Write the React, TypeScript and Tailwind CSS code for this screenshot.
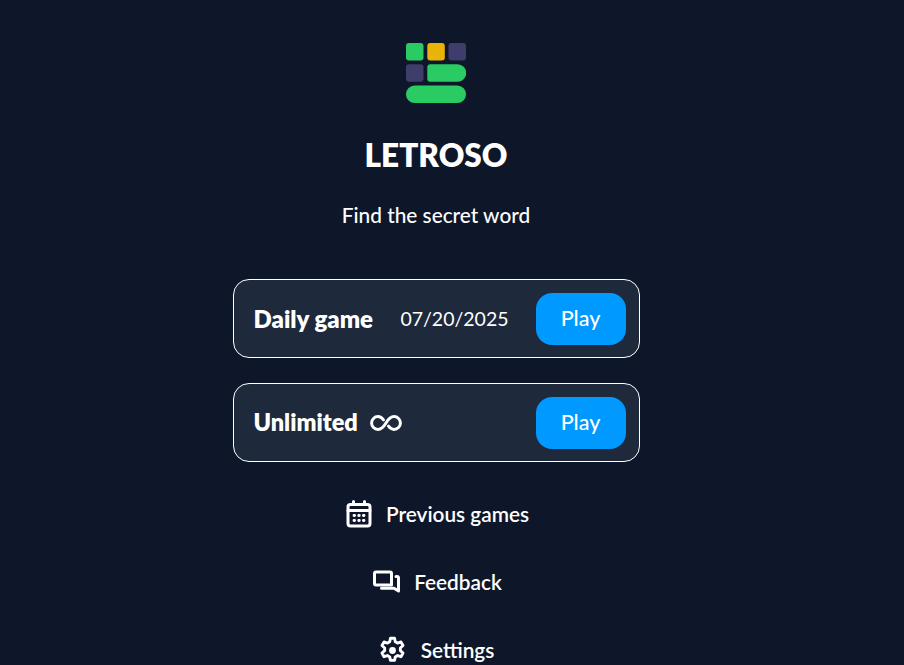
const Logo = () => (
  <svg width="60" height="60" viewBox="0 0 60 60" className="block">
    <rect x="0" y="0" width="17.5" height="17.5" rx="3" fill="#2acb62" />
    <rect x="21.3" y="0" width="17.5" height="17.5" rx="3" fill="#eab308" />
    <rect x="42.5" y="0" width="17.5" height="17.5" rx="3" fill="#3f3d6b" />
    <rect x="0" y="21.3" width="17.5" height="17.5" rx="3" fill="#3f3d6b" />
    <path d="M24.3 21.3H51.5a8.700 8.700 0 0 1 0 17.400H24.3a3 3 0 0 1-3-3V24.3a3 3 0 0 1 3-3z" fill="#2acb62" />
    <rect x="0" y="42.5" width="60" height="17.5" rx="8.750" fill="#2acb62" />
  </svg>
);

const LoopIcon = () => (
  <svg width="32" height="18" viewBox="0 0 32 18" fill="none" stroke="white" strokeWidth="3" strokeLinecap="round">
    <path d="M13.500 5.800C12 3.800 10.500 2.600 8 2.600a6.400 6.400 0 0 0 0 12.800c3.600 0 5.600-2.400 8-6.400s4.400-6.400 8-6.400a6.400 6.400 0 0 1 0 12.800c-2.500 0-4-1.200-5.500-3.200" />
  </svg>
);

const CalendarIcon = () => (
  <svg width="26" height="28" viewBox="0 0 26 28" fill="none" stroke="white" strokeWidth="3" strokeLinecap="round" strokeLinejoin="round">
    <rect x="2" y="4.500" width="22" height="21.500" rx="2.500" />
    <path d="M2 10.500h22M7.500 1.500V4M18.500 1.500V4" />
    <path d="M8 15.500h.6M12.700 15.500h.6M17.400 15.500h.6M8 20.500h.6M12.700 20.500h.6M17.400 20.500h.6" strokeWidth="2.800" />
  </svg>
);

const ChatIcon = () => (
  <svg width="27" height="25" viewBox="0 0 27 25" fill="none" stroke="white" strokeWidth="3" strokeLinecap="round" strokeLinejoin="round">
    <path d="M6.500 15H3a1.500 1.500 0 0 1-1.500-1.500v-10A1.500 1.500 0 0 1 3 2h14a1.500 1.500 0 0 1 1.500 1.500V15H6.500z" />
    <path d="M23 6.500h1A1.500 1.500 0 0 1 25.500 8v13l-4.500-2.800H8.500" />
  </svg>
);

const GearIcon = () => (
  <svg width="29" height="29" viewBox="0 0 24 24" className="-ml-[3px]" fill="none" stroke="white" strokeWidth="2.400" strokeLinecap="round" strokeLinejoin="round">
    <path d="M10.300 1.800h3.400l.6 2.900 1.900 1.100 2.800-.9 1.700 3-2.200 2v2.200l2.200 2-1.700 3-2.800-.9-1.900 1.100-.6 2.900h-3.400l-.6-2.900-1.900-1.100-2.800.9-1.700-3 2.200-2v-2.200l-2.200-2 1.700-3 2.800.9 1.900-1.100z" />
    <circle cx="12" cy="12" r="2.800" fill="white" stroke="none" />
  </svg>
);

const GameCard = ({ children }: { children: React.ReactNode }) => (
  <div className="flex h-[79px] w-[407px] items-center justify-between rounded-2xl border border-white bg-[#1e293b] pl-5 pr-[13px]">
    {children}
    <button className="h-[52px] w-[90px] rounded-2xl bg-[#0099ff] text-[21.500px] font-medium text-white">
      Play
    </button>
  </div>
);

const NavLink = ({ icon, label }: { icon: React.ReactNode; label: string }) => (
  <a className="flex h-[68px] items-center justify-center gap-[14px] pl-[3px] text-[20.800px] font-semibold text-white">
    {icon}
    <span>{label}</span>
  </a>
);

export default function App() {
  return (
    <div className="h-[665px] overflow-hidden bg-[#0e172a] font-['Lato','Noto_Sans',sans-serif] text-white">
      <main className="flex w-[872px] flex-col items-center pt-[43px]">
        <Logo />
        <h1 className="mt-[32px] text-[31.500px] leading-[40px] font-extrabold">LETROSO</h1>
        <p className="mt-[26px] text-[20.800px] leading-[28px] font-medium">Find the secret word</p>

        <div className="mt-[50px] flex flex-col gap-[25px]">
          <GameCard>
            <div className="flex flex-1 items-center justify-between pr-[27px]">
              <span className="text-[24px] font-extrabold">Daily game</span>
              <span className="text-[19.500px]">07/20/2025</span>
            </div>
          </GameCard>
          <GameCard>
            <div className="flex items-center gap-3">
              <span className="text-[23.500px] font-extrabold">Unlimited</span>
              <LoopIcon />
            </div>
          </GameCard>
        </div>

        <nav className="mt-[18px] flex flex-col">
          <NavLink icon={<CalendarIcon />} label="Previous games" />
          <NavLink icon={<ChatIcon />} label="Feedback" />
          <NavLink icon={<GearIcon />} label="Settings" />
        </nav>
      </main>
    </div>
  );
}
